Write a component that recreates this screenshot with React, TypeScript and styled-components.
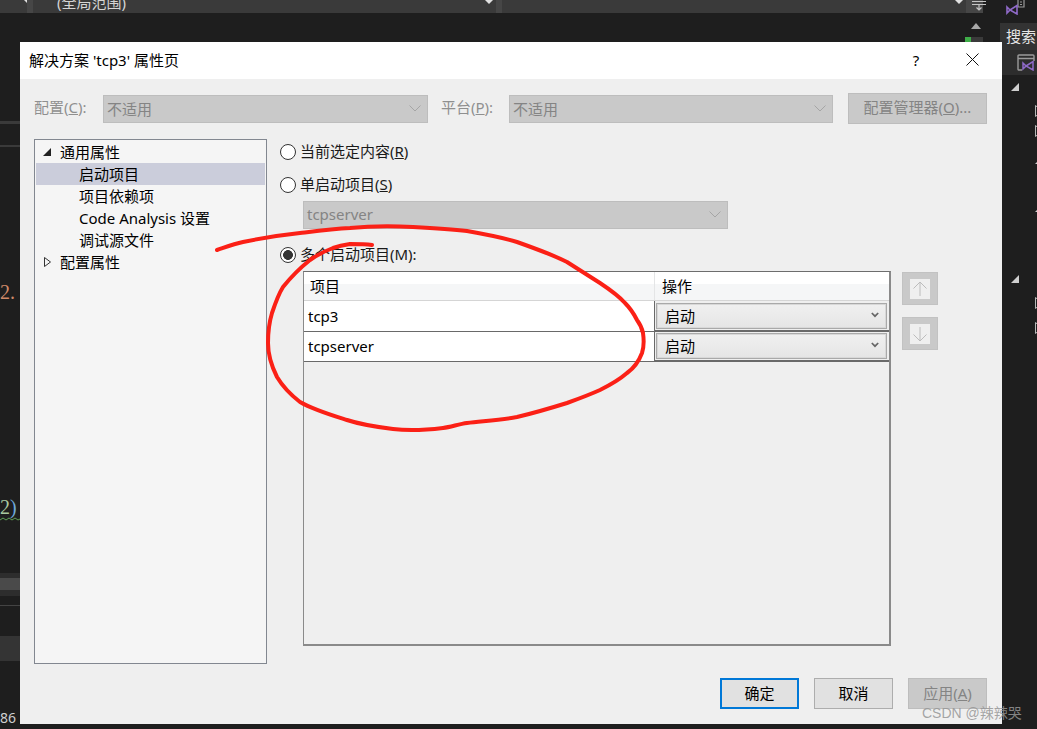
import React from "react";
import styled, { createGlobalStyle } from "styled-components";

const FONT = `"Noto Sans", "Noto Sans CJK SC", sans-serif`;

const Global = createGlobalStyle`
  html, body { margin: 0; padding: 0; width: 1037px; height: 729px; overflow: hidden; background: #1e1e1e; }
  #root { width: 1037px; height: 729px; }
  * { box-sizing: border-box; }
`;

const Page = styled.div`
  position: relative;
  width: 1037px;
  height: 729px;
  display: flex;
  background: #1e1e1e;
  font-family: ${FONT};
  overflow: hidden;
`;

const Editor = styled.div`
  width: 1000px;
  display: flex;
  flex-direction: column;
`;

const Toolbar = styled.div`
  height: 15px;
  display: flex;
  gap: 6px;
  padding-bottom: 2px;
  background: #464646;
  padding-right: 17px;
  overflow: hidden;
  background-clip: content-box;
`;

const ToolCombo = styled.div<{ $w: number }>`
  width: ${(p) => p.$w}px;
  height: 13px;
  background: #3a3a3a;
  display: flex;
  align-items: flex-end;
  justify-content: space-between;
  padding: 0 3px 0 24px;
  color: #d4d4d4;
  font-size: 15px;
  line-height: 22px;
  overflow: hidden;
  flex: none;
`;

const ToolArrow = styled.span`
  width: 0;
  height: 0;
  border-left: 4px solid transparent;
  border-right: 4px solid transparent;
  border-top: 4px solid #e0e0e0;
  align-self: flex-start;
  margin-left: auto;
`;

const ToolIcon = styled.svg`
  display: block;
  flex: none;
`;

const EditorBody = styled.div`
  flex: 1;
  display: flex;
  justify-content: space-between;
`;

const Gutter = styled.div`
  width: 20px;
  display: flex;
  flex-direction: column;
`;

const GutterBar = styled.div<{ $top: number; $h: number; $c: string }>`
  height: ${(p) => p.$h}px;
  margin-top: ${(p) => p.$top}px;
  background: ${(p) => p.$c};
  flex: none;
`;

const CodeText = styled.div<{ $top: number; $c: string }>`
  margin-top: ${(p) => p.$top}px;
  height: 20px;
  line-height: 20px;
  font-family: "Liberation Serif", "DejaVu Serif", serif;
  font-size: 20px;
  color: ${(p) => p.$c};
  white-space: nowrap;
  flex: none;
`;

const Paren = styled.span`
  color: #6fa8d8;
`;

const Squiggle = styled.svg`
  display: block;
  flex: none;
  width: 20px;
  height: 4px;
`;

const LineNo = styled.div`
  margin-top: 49px;
  font-size: 14px;
  line-height: 16px;
  color: #cfcfcf;
  height: 16px;
  flex: none;
`;

const ScrollColumn = styled.div`
  width: 22px;
  margin-right: 13px;
  display: flex;
  flex-direction: column;
  align-items: center;
`;

const ScrollUp = styled.span`
  margin-top: 8px;
  width: 0;
  height: 0;
  border-left: 5px solid transparent;
  border-right: 5px solid transparent;
  border-bottom: 6px solid #a8a8a8;
`;

const ScrollMark = styled.div`
  margin-top: 8px;
  width: 18px;
  height: 5px;
  align-self: flex-start;
  background: linear-gradient(90deg, #3fae49 0 6px, #3a3a3a 6px);
`;

const Side = styled.div`
  width: 37px;
  display: flex;
  flex-direction: column;
`;

const SideTop = styled.div`
  height: 23px;
  padding-left: 6px;
`;

const SideSearch = styled.div`
  height: 27px;
  background: #333;
  color: #e6e6e6;
  font-size: 15px;
  line-height: 27px;
  padding-left: 6px;
  white-space: nowrap;
  overflow: hidden;
`;

const SideIconBar = styled.div`
  height: 25px;
  background: #2d2d2d;
  padding: 4px 0 0 17px;
`;

const SideTree = styled.div`
  flex: 1;
  display: flex;
  flex-direction: column;
`;

const SideGlyph = styled.svg<{ $top: number; $x: number }>`
  display: block;
  flex: none;
  margin-top: ${(p) => p.$top}px;
  margin-left: ${(p) => p.$x}px;
`;

const Dialog = styled.div`
  position: absolute;
  left: 20px;
  top: 42px;
  width: 982px;
  height: 682px;
  background: #efefef;
  display: flex;
  flex-direction: column;
  color: #000;
  font-size: 15px;
`;

const TitleBar = styled.div`
  height: 37px;
  background: #fff;
  display: flex;
  align-items: center;
  padding: 0 0 2px 9px;
  flex: none;
`;

const TitleText = styled.div`
  flex: 1;
`;

const TitleHelp = styled.div`
  width: 14px;
  text-align: center;
  margin-right: 43px;
`;

const TitleClose = styled.svg`
  margin-right: 23px;
  display: block;
`;

const ConfigRow = styled.div`
  margin-top: 14px;
  padding: 0 15px 0 14px;
  height: 31px;
  display: flex;
  flex: none;
`;

const FieldLabel = styled.div<{ $w: number; $ml?: number }>`
  width: ${(p) => p.$w}px;
  margin-left: ${(p) => p.$ml ?? 0}px;
  color: #8f8f8f;
  line-height: 29px;
  white-space: nowrap;
  flex: none;
`;

const DisabledSelect = styled.div<{ $w: number; $top?: number; $ml?: number }>`
  width: ${(p) => p.$w}px;
  height: 28px;
  margin-top: ${(p) => p.$top ?? 0}px;
  margin-left: ${(p) => p.$ml ?? 0}px;
  background: #c9c9c9;
  border: 1px solid #bdbdbd;
  color: #848484;
  display: flex;
  align-items: center;
  justify-content: space-between;
  padding: 0 6px 2px 3px;
  flex: none;
`;

const ManagerButton = styled.div`
  width: 139px;
  height: 31px;
  margin-left: 15px;
  background: #c9c9c9;
  border: 1px solid #bdbdbd;
  color: #848484;
  text-align: center;
  line-height: 27px;
  white-space: nowrap;
`;

const Main = styled.div`
  margin-top: 15px;
  padding-left: 14px;
  display: flex;
  flex: none;
`;

const Tree = styled.div`
  width: 233px;
  height: 525px;
  background: #f5f5f5;
  border: 1px solid #828790;
  padding: 1px;
  flex: none;
`;

const TreeRow = styled.div<{ $child?: boolean; $selected?: boolean }>`
  height: 22px;
  line-height: 21px;
  display: flex;
  align-items: center;
  padding-left: ${(p) => (p.$child ? 43 : 7)}px;
  background: ${(p) => (p.$selected ? "#cbcddb" : "transparent")};
  white-space: nowrap;
`;

const TreeArrow = styled.svg`
  width: 9px;
  height: 10px;
  margin-right: 8px;
  display: block;
  flex: none;
`;

const Options = styled.div`
  margin-left: 13px;
  width: 660px;
  display: flex;
  flex-direction: column;
`;

const RadioRow = styled.div<{ $top: number }>`
  margin-top: ${(p) => p.$top}px;
  height: 22px;
  display: flex;
  align-items: center;
  gap: 4px;
  flex: none;
  color: #1a1a1a;
`;

const Radio = styled.span<{ $on?: boolean }>`
  width: 16px;
  height: 16px;
  border-radius: 50%;
  border: 1px solid #333;
  background: ${(p) => (p.$on ? "radial-gradient(circle, #333 0 4.6px, #fff 5.2px)" : "#fff")};
  flex: none;
`;

const RadioLabel = styled.span`
  white-space: nowrap;
  padding-bottom: 3px;
`;

const GridRow = styled.div`
  margin: 5px 0 0 23px;
  display: flex;
  gap: 11px;
`;

const Grid = styled.div`
  width: 588px;
  height: 375px;
  border-top: 1px solid #6d6d6d;
  border-left: 1px solid #8a8a8a;
  border-right: 2px solid #8a8a8a;
  border-bottom: 2px solid #8a8a8a;
  flex: none;
`;

const GridHead = styled.div`
  height: 29px;
  display: grid;
  grid-template-columns: 351px 1fr;
  background: linear-gradient(#fff 0 12px, #f5f6f7 12px);
  border-bottom: 1px solid #d5d5d5;
`;

const HeadCell = styled.div<{ $last?: boolean }>`
  padding-left: ${(p) => (p.$last ? 7 : 6)}px;
  line-height: 28px;
  border-right: ${(p) => (p.$last ? "none" : "1px solid #e4e5e6")};
`;

const GridBodyRow = styled.div<{ $h: number }>`
  height: ${(p) => p.$h}px;
  display: grid;
  grid-template-columns: 351px 1fr;
  border-bottom: 2px solid #696969;
  background: #efefef;
`;

const NameCell = styled.div<{ $lh: number }>`
  background: #fff;
  border-right: 1px solid #696969;
  padding-left: 4px;
  line-height: ${(p) => p.$lh}px;
`;

const ActionCell = styled.div<{ $pad: number }>`
  padding: ${(p) => p.$pad}px 0 0 1px;
`;

const ActionSelect = styled.div`
  height: 26px;
  width: 231px;
  border: 1px solid #a9a9a9;
  outline: 1px solid #d8d8d8;
  outline-offset: -2px;
  background: linear-gradient(#f0f0f0, #e5e5e5);
  display: flex;
  align-items: center;
  justify-content: space-between;
  padding: 0 7px 2px 8px;
`;

const MoveColumn = styled.div`
  margin-top: 1px;
  display: flex;
  flex-direction: column;
  gap: 12px;
`;

const MoveButton = styled.div`
  width: 36px;
  height: 33px;
  background: #c9c9c9;
  border: 1px solid #c2c2c2;
  display: flex;
  align-items: center;
  justify-content: center;
`;

const Footer = styled.div`
  margin-top: auto;
  padding: 0 15px 15px 0;
  display: flex;
  justify-content: flex-end;
  gap: 15px;
`;

const DialogButton = styled.div<{ $kind?: "primary" | "disabled" }>`
  width: 79px;
  height: 31px;
  text-align: center;
  line-height: ${(p) => (p.$kind === "primary" ? 27 : 29)}px;
  background: ${(p) => (p.$kind === "disabled" ? "#c9c9c9" : "#e1e1e1")};
  color: ${(p) => (p.$kind === "disabled" ? "#848484" : "#000")};
  border: ${(p) =>
    p.$kind === "primary"
      ? "2px solid #0078d7"
      : p.$kind === "disabled"
      ? "1px solid #bdbdbd"
      : "1px solid #adadad"};
`;

const Annotation = styled.svg`
  position: absolute;
  left: 0;
  top: 0;
  width: 1037px;
  height: 729px;
  pointer-events: none;
`;

const Watermark = styled.div`
  position: absolute;
  left: 922px;
  top: 703px;
  font-family: "Liberation Sans", "Noto Sans CJK SC", sans-serif;
  font-size: 14px;
  line-height: 20px;
  color: rgba(150, 150, 150, 0.85);
  white-space: nowrap;
`;

const Chevron = () => (
  <svg width="12" height="7" viewBox="0 0 12 7">
    <path d="M0.5 0.5 L6 6 L11.5 0.5" fill="none" stroke="#a5a5a5" strokeWidth="1" />
  </svg>
);

const SmallChevron = () => (
  <svg width="8" height="6" viewBox="0 0 8 6">
    <path d="M0.8 1 L4 4.2 L7.2 1" fill="none" stroke="#666" strokeWidth="1.7" />
  </svg>
);

const Outline = ({ top, x }: { top: number; x: number }) => (
  <SideGlyph $top={top} $x={x} width="6" height="12" viewBox="0 0 6 12">
    <path d="M0.5 0.5 L6 5 V7 L0.5 11.5 Z" fill="none" stroke="#b8b8b8" />
  </SideGlyph>
);

const Solid = ({ top, x, w = 8 }: { top: number; x: number; w?: number }) => (
  <SideGlyph $top={top} $x={x} width={w} height={w} viewBox="0 0 8 8">
    <path d="M8 0 V8 H0 Z" fill="#cfcfcf" />
  </SideGlyph>
);

const RED_PATH =
  "M217 250 C226 247 234 244 243 242 C262 238 281 235 300 233 C317 231 333 229 350 228 C371 226 392 226 413 227 C431 228 449 229 467 231 C484 234 501 237 517 242 C534 248 551 254 567 262 C578 269 589 276 600 283 C609 289 618 295 625 303 C630 308 634 314 637 320 C640 324 642 328 643 333 C644 340 644 347 642 353 C639 361 634 368 627 373 C619 380 610 385 600 390 C589 395 578 399 567 403 C551 408 534 413 517 417 C501 420 484 421 467 423 C459 424 451 427 443 428 C426 430 410 431 393 429 C377 427 362 425 347 420 C331 415 314 410 300 402 C291 395 283 387 277 377 C272 367 268 355 268 343 C268 333 269 323 272 313 C275 304 278 295 283 287 C291 277 300 268 310 260 C317 255 325 251 333 248 C339 246 344 245 350 244 C357 244 365 244 372 245";

export default function App() {
  return (
    <Page>
      <Global />
      <Editor>
        <Toolbar>
          <ToolCombo $w={24}>
            <ToolArrow />
          </ToolCombo>
          <ToolCombo $w={463}>
            (全局范围)
            <ToolArrow />
          </ToolCombo>
          <ToolCombo $w={464}>
            <ToolArrow />
          </ToolCombo>
          <ToolIcon width="14" height="11" viewBox="0 0 14 11">
            <path d="M0 1.5 H14 M0 4.5 H14 M7 5 V10 M4.5 7.5 L7 10 L9.5 7.5" fill="none" stroke="#c4c4c4" strokeWidth="1.2" />
          </ToolIcon>
        </Toolbar>
        <EditorBody>
          <Gutter>
            <GutterBar $top={106} $h={3} $c="#3a3a3a" />
            <GutterBar $top={21} $h={2} $c="#3a3a3a" />
            <CodeText $top={135} $c="#cf8a68">
              2.
            </CodeText>
            <CodeText $top={195} $c="#a9c9a0">
              2<Paren>)</Paren>
            </CodeText>
            <Squiggle viewBox="0 0 20 4">
              <path d="M0 3 L3 1 L6 3 L9 1 L12 3 L15 1 L18 3 L20 2" fill="none" stroke="#5f9e56" strokeWidth="1" />
            </Squiggle>
            <GutterBar $top={52} $h={23} $c="linear-gradient(#2d2d2d 0 5px, #4a4a4a 5px 17px, #2d2d2d 17px)" />
            <GutterBar $top={9} $h={1} $c="#444" />
            <GutterBar $top={30} $h={25} $c="#343434" />
            <LineNo>86</LineNo>
          </Gutter>
          <ScrollColumn>
            <ScrollUp />
            <ScrollMark />
          </ScrollColumn>
        </EditorBody>
      </Editor>
      <Side>
        <SideTop>
          <svg width="20" height="15" viewBox="0 0 20 15" style={{ display: "block" }}>
            <path d="M12 0 V7 H18 V0 M14 2 H16 M14 4.5 H16" fill="none" stroke="#9a9a9a" strokeWidth="1.2" />
            <path d="M1 7 L4 10 L1 13 Z M4 10 L11 5.5 V14 Z" fill="none" stroke="#8f6ac8" strokeWidth="1.6" />
          </svg>
        </SideTop>
        <SideSearch>搜索</SideSearch>
        <SideIconBar>
          <svg width="18" height="17" viewBox="0 0 18 17" style={{ display: "block" }}>
            <path d="M5 16 H1.5 Q1 16 1 15 V2 Q1 1 2 1 H16 Q17 1 17 2 V7 M1 4.5 H17" fill="none" stroke="#9a9a9a" strokeWidth="1.4" />
            <path d="M6 9 L9 12 L6 15 Z M9 12 L16 7.5 V16 Z" fill="none" stroke="#8f6ac8" strokeWidth="1.5" />
          </svg>
        </SideIconBar>
        <SideTree>
          <Solid top={8} x={11} />
          <Outline top={14} x={35} />
          <Outline top={8} x={35} />
          <Solid top={23} x={35} w={4} />
          <Solid top={44} x={35} w={4} />
          <Solid top={63} x={11} />
          <Outline top={14} x={35} />
          <Outline top={13} x={35} />
        </SideTree>
      </Side>

      <Dialog>
        <TitleBar>
          <TitleText>解决方案 'tcp3' 属性页</TitleText>
          <TitleHelp>?</TitleHelp>
          <TitleClose width="13" height="13" viewBox="0 0 13 13">
            <path d="M0.5 0.5 L12.5 12.5 M12.5 0.5 L0.5 12.5" stroke="#111" strokeWidth="1" fill="none" />
          </TitleClose>
        </TitleBar>
        <ConfigRow>
          <FieldLabel $w={69}>
            配置(<u>C</u>):
          </FieldLabel>
          <DisabledSelect $w={325} $top={2}>
            不适用
            <Chevron />
          </DisabledSelect>
          <FieldLabel $w={68} $ml={13}>
            平台(<u>P</u>):
          </FieldLabel>
          <DisabledSelect $w={324} $top={2}>
            不适用
            <Chevron />
          </DisabledSelect>
          <ManagerButton>
            配置管理器(<u>O</u>)...
          </ManagerButton>
        </ConfigRow>
        <Main>
          <Tree>
            <TreeRow>
              <TreeArrow viewBox="0 0 9 10">
                <path d="M8 1 V9 H0 Z" fill="#222" />
              </TreeArrow>
              通用属性
            </TreeRow>
            <TreeRow $child $selected>
              启动项目
            </TreeRow>
            <TreeRow $child>项目依赖项</TreeRow>
            <TreeRow $child>Code Analysis 设置</TreeRow>
            <TreeRow $child>调试源文件</TreeRow>
            <TreeRow>
              <TreeArrow viewBox="0 0 9 10">
                <path d="M1.5 0.5 L7.5 5 L1.5 9.5 Z" fill="none" stroke="#333" />
              </TreeArrow>
              配置属性
            </TreeRow>
          </Tree>
          <Options>
            <RadioRow $top={2}>
              <Radio />
              <RadioLabel>
                当前选定内容(<u>R</u>)
              </RadioLabel>
            </RadioRow>
            <RadioRow $top={11}>
              <Radio />
              <RadioLabel>
                单启动项目(<u>S</u>)
              </RadioLabel>
            </RadioRow>
            <DisabledSelect $w={425} $top={5} $ml={23}>
              tcpserver
              <Chevron />
            </DisabledSelect>
            <RadioRow $top={15}>
              <Radio $on />
              <RadioLabel>多个启动项目(M):</RadioLabel>
            </RadioRow>
            <GridRow>
              <Grid>
                <GridHead>
                  <HeadCell>项目</HeadCell>
                  <HeadCell $last>操作</HeadCell>
                </GridHead>
                <GridBodyRow $h={31}>
                  <NameCell $lh={30}>tcp3</NameCell>
                  <ActionCell $pad={2}>
                    <ActionSelect>
                      启动
                      <SmallChevron />
                    </ActionSelect>
                  </ActionCell>
                </GridBodyRow>
                <GridBodyRow $h={30}>
                  <NameCell $lh={29}>tcpserver</NameCell>
                  <ActionCell $pad={1}>
                    <ActionSelect>
                      启动
                      <SmallChevron />
                    </ActionSelect>
                  </ActionCell>
                </GridBodyRow>
              </Grid>
              <MoveColumn>
                <MoveButton>
                  <svg width="20" height="20" viewBox="0 0 20 20" style={{ background: "#efefef" }}>
                    <path d="M10 17 V3 M3.5 9.5 L10 3 L16.5 9.5" fill="none" stroke="#bcbcbc" strokeWidth="1" />
                  </svg>
                </MoveButton>
                <MoveButton>
                  <svg width="20" height="20" viewBox="0 0 20 20" style={{ background: "#efefef" }}>
                    <path d="M10 3 V17 M3.5 10.5 L10 17 L16.5 10.5" fill="none" stroke="#bcbcbc" strokeWidth="1" />
                  </svg>
                </MoveButton>
              </MoveColumn>
            </GridRow>
          </Options>
        </Main>
        <Footer>
          <DialogButton $kind="primary">确定</DialogButton>
          <DialogButton>取消</DialogButton>
          <DialogButton $kind="disabled">
            应用(<u>A</u>)
          </DialogButton>
        </Footer>
      </Dialog>

      <Annotation viewBox="0 0 1037 729">
        <path d={RED_PATH} fill="none" stroke="#fb2016" strokeWidth="4" strokeLinecap="round" strokeLinejoin="round" />
      </Annotation>
      <Watermark>CSDN @辣辣哭</Watermark>
    </Page>
  );
}
